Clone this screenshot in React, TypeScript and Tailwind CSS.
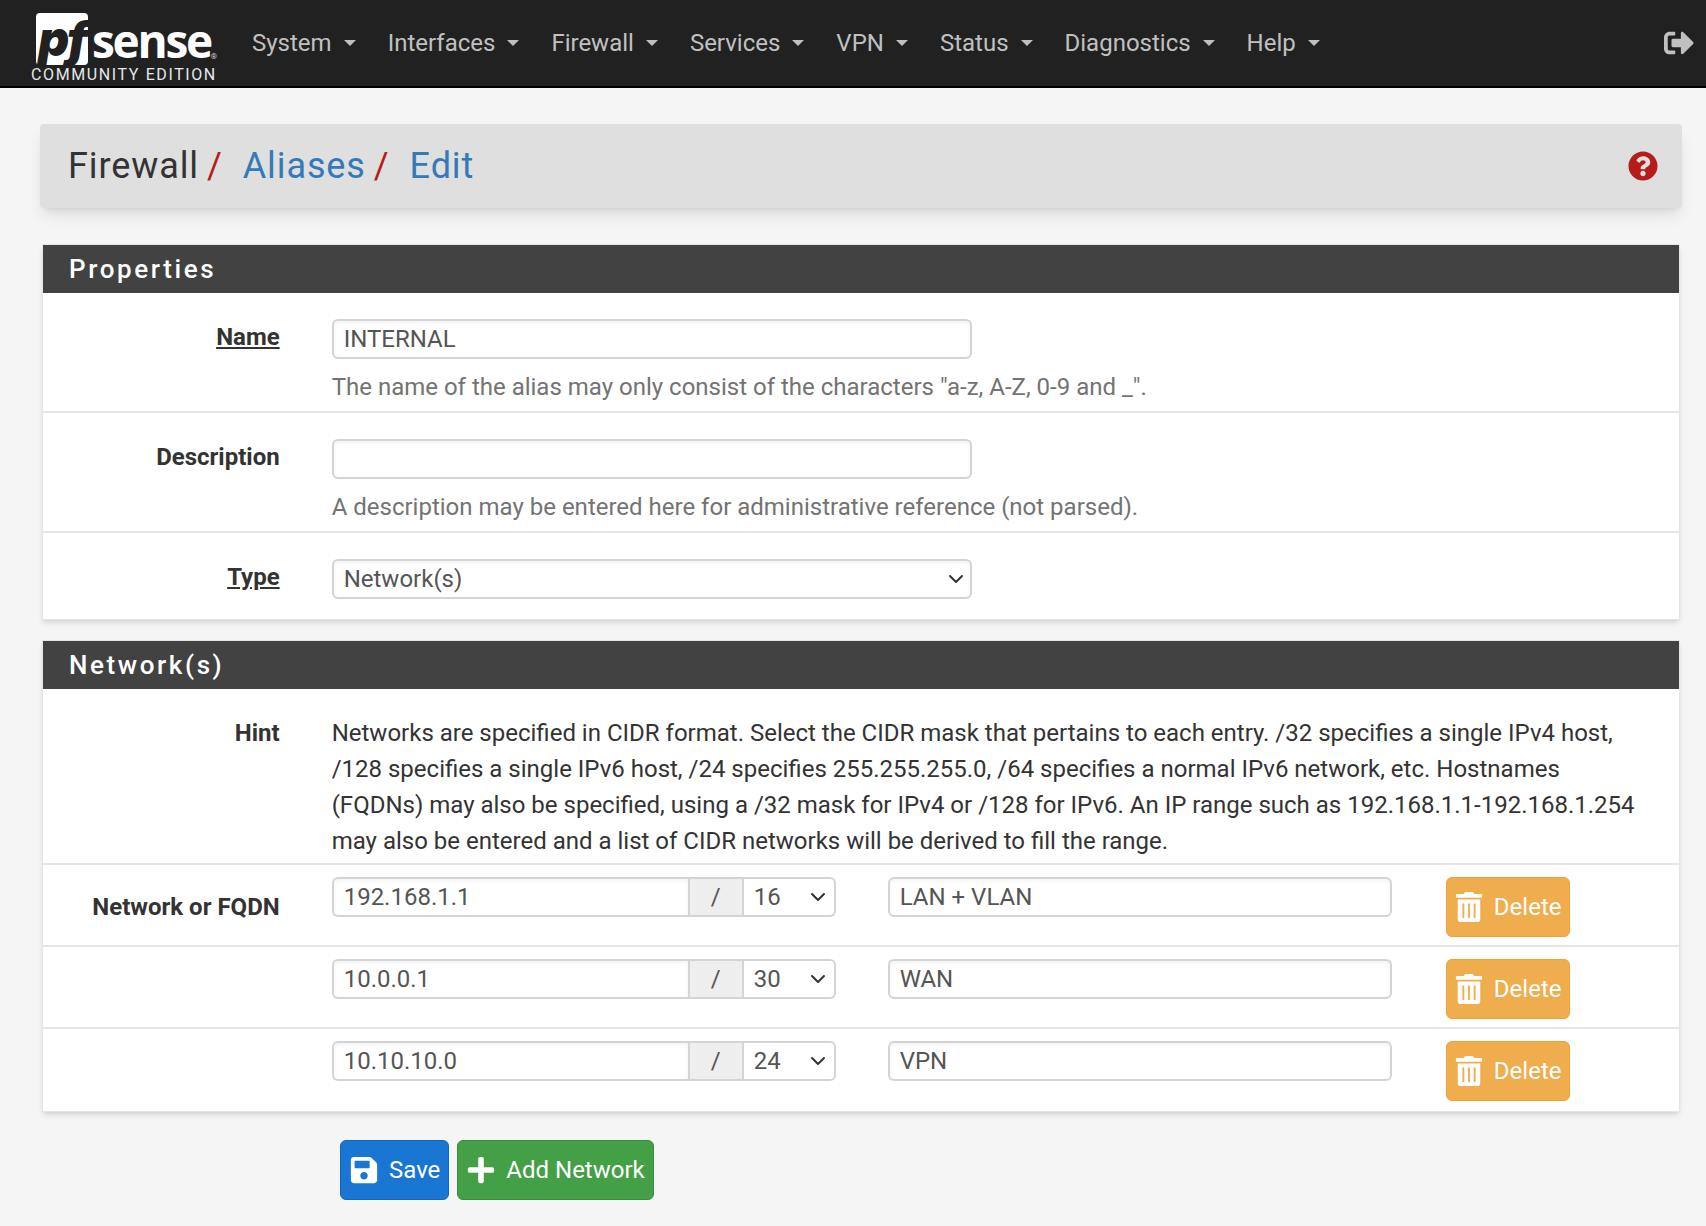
import { ChevronDown } from "lucide-react";
import { FaPlus, FaQuestionCircle, FaSave, FaSignOutAlt, FaTrashAlt } from "react-icons/fa";

const menus = ["System", "Interfaces", "Firewall", "Services", "VPN", "Status", "Diagnostics", "Help"];

const networks = [
  { address: "192.168.1.1", mask: "16", note: "LAN + VLAN" },
  { address: "10.0.0.1", mask: "30", note: "WAN" },
  { address: "10.10.10.0", mask: "24", note: "VPN" },
];

const inputClass =
  "h-10 rounded-md border-2 border-neutral-300 bg-white px-2.5 text-[#555] shadow-inner outline-none";

const Caret = () => (
  <svg viewBox="0 0 12 6" className="h-2 w-3 fill-[#c0c0c0]">
    <path d="M0 0h12L6 6z" />
  </svg>
);

const Logo = () => (
  <div className="flex w-48 flex-col items-center pt-2.5">
    <div className="ml-2 flex items-end self-start">
      <div className="flex h-13 w-13 items-center justify-center rounded-sm bg-white">
        <span className="font-['Inter'] text-5xl font-black italic leading-none tracking-tighter text-[#212121]">pf</span>
      </div>
      <span className="mb-0.5 ml-1 font-['Open_Sans'] text-[46px] font-bold leading-none tracking-tighter text-white">sense</span>
      <span className="mb-1 text-[8px] leading-none text-gray-300">®</span>
    </div>
    <span className="mt-0.5 text-base leading-none tracking-widest text-gray-200">COMMUNITY EDITION</span>
  </div>
);

const Navbar = () => (
  <nav className="flex h-22 items-center border-b-2 border-black bg-[#212121] pl-7 pr-3">
    <Logo />
    <ul className="ml-8 flex items-center gap-8">
      {menus.map((m) => (
        <li key={m} className="flex items-center gap-3 text-[#c0c0c0]">
          {m}
          <Caret />
        </li>
      ))}
    </ul>
    <FaSignOutAlt className="ml-auto text-3xl text-[#c0c0c0]" />
  </nav>
);

const Breadcrumb = () => (
  <div className="mt-9 flex h-21 items-center justify-between rounded bg-[#dfdfdf] pl-7 pr-6 shadow-lg">
    <h1 className="flex gap-2 text-4xl tracking-wide text-[#333]">
      <span>Firewall</span>
      <span className="text-[#b71c1c]">/</span>
      <span className="ml-3 text-[#337ab7]">Aliases</span>
      <span className="text-[#b71c1c]">/</span>
      <span className="ml-3 text-[#337ab7]">Edit</span>
    </h1>
    <FaQuestionCircle className="text-3xl text-[#b71c1c]" />
  </div>
);

const Panel = ({ title, children }: { title: string; children: React.ReactNode }) => (
  <section className="border border-neutral-200 bg-white shadow-md">
    <h2 className="flex h-12 items-center bg-[#424242] pl-6.5 text-[26px] font-medium tracking-widest text-white">{title}</h2>
    {children}
  </section>
);

const Label = ({ children, underline }: { children?: string; underline?: boolean }) => (
  <div className="w-1/6 shrink-0 pr-9 text-right font-bold text-[#333]">
    <span className={underline ? "underline" : ""}>{children}</span>
  </div>
);

const Properties = () => (
  <Panel title="Properties">
    <div className="flex border-b-2 border-neutral-200 pb-1.5 pt-6.5">
      <Label underline>Name</Label>
      <div className="flex-1 pl-4 pr-6">
        <input readOnly defaultValue="INTERNAL" className={`${inputClass} block w-160`} />
        <p className="mt-2.5 text-[#737373]">The name of the alias may only consist of the characters "a-z, A-Z, 0-9 and _".</p>
      </div>
    </div>
    <div className="flex border-b-2 border-neutral-200 pb-1.5 pt-6.5">
      <Label>Description</Label>
      <div className="flex-1 pl-4 pr-6">
        <input readOnly className={`${inputClass} block w-160`} />
        <p className="mt-2.5 text-[#737373]">A description may be entered here for administrative reference (not parsed).</p>
      </div>
    </div>
    <div className="flex pb-5 pt-6.5">
      <Label underline>Type</Label>
      <div className="flex-1 pl-4 pr-6">
        <div className="relative w-160">
          <select defaultValue="Network(s)" className={`${inputClass} w-full appearance-none`}>
            <option>Network(s)</option>
          </select>
          <ChevronDown className="absolute right-1 top-2 size-6 text-[#333]" strokeWidth={2} />
        </div>
      </div>
    </div>
  </Panel>
);

const NetworkRow = ({ address, mask, note, label, last }: { address: string; mask: string; note: string; label?: string; last?: boolean }) => (
  <div className={`flex pt-3 ${last ? "pb-2.5" : "border-b-2 border-neutral-200 pb-2"}`}>
    <div className="w-1/6 shrink-0 pr-9 pt-3 text-right font-bold text-[#333]">{label}</div>
    <div className="flex items-start gap-13 pl-4">
      <div className="flex h-10 w-126">
        <input readOnly defaultValue={address} className="h-10 min-w-0 flex-1 rounded-l-md border-2 border-r-0 border-neutral-300 bg-white px-2.5 text-[#555] shadow-inner outline-none" />
        <span className="flex h-10 w-14 items-center justify-center border-2 border-neutral-300 bg-[#eee] text-[#555]">/</span>
        <div className="relative w-23">
          <select defaultValue={mask} className="h-10 w-full appearance-none rounded-r-md border-2 border-l-0 border-neutral-300 bg-white px-2.5 text-[#555]">
            <option>{mask}</option>
          </select>
          <ChevronDown className="absolute right-1.5 top-2 size-6 text-[#333]" strokeWidth={2} />
        </div>
      </div>
      <input readOnly defaultValue={note} className={`${inputClass} w-126`} />
      <button className="ml-0.5 flex h-15 w-31 items-center justify-center gap-2.5 rounded-md border border-[#eea236] bg-[#f0ad4e] text-white">
        <FaTrashAlt className="text-3xl" />
        Delete
      </button>
    </div>
  </div>
);

export default function App() {
  return (
    <div className="min-h-screen bg-[#f5f5f5] font-['Roboto',sans-serif] text-2xl leading-9">
      <Navbar />
      <main className="pb-6 pl-10 pr-6">
        <Breadcrumb />
        <div className="mx-0.5 mt-9 space-y-5">
          <Properties />
          <Panel title="Network(s)">
            <div className="flex border-b-2 border-neutral-200 pb-1 pt-6.5">
              <Label>Hint</Label>
              <p className="flex-1 pl-4 pr-10 text-[#333]">
                Networks are specified in CIDR format. Select the CIDR mask that pertains to each entry. /32 specifies a single IPv4 host, /128 specifies a single IPv6 host, /24 specifies 255.255.255.0, /64 specifies a normal IPv6 network, etc. Hostnames (FQDNs) may also be specified, using a /32 mask for IPv4 or /128 for IPv6. An IP range such as 192.168.1.1-192.168.1.254 may also be entered and a list of CIDR networks will be derived to fill the range.
              </p>
            </div>
            {networks.map((n, i) => (
              <NetworkRow key={n.address} {...n} label={i === 0 ? "Network or FQDN" : undefined} last={i === networks.length - 1} />
            ))}
          </Panel>
        </div>
        <div className="ml-75 mt-7 flex gap-2">
          <button className="flex h-15 items-center gap-2.5 rounded-md border border-[#1565c0] bg-[#1976d2] px-2 text-white">
            <FaSave className="text-3xl" />
            Save
          </button>
          <button className="flex h-15 items-center gap-2.5 rounded-md border border-[#388e3c] bg-[#43a047] px-2 text-white">
            <FaPlus className="text-3xl" />
            Add Network
          </button>
        </div>
      </main>
    </div>
  );
}
